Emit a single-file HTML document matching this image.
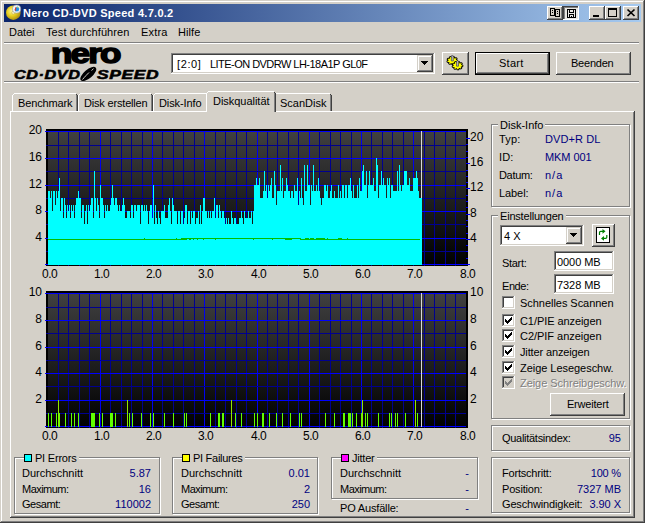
<!DOCTYPE html>
<html lang="de"><head><meta charset="utf-8"><title>Nero CD-DVD Speed 4.7.0.2</title><style>
html,body{margin:0;padding:0}
body{width:645px;height:523px;overflow:hidden;background:#d4d0c8;position:relative;font-family:"Liberation Sans",sans-serif}
body>div,body>svg,body>span{position:absolute;box-sizing:content-box}
.t{white-space:pre;font-size:11px;line-height:13px;color:#000}
.ctr{letter-spacing:-0.5px}
.logo1{font-weight:bold;font-size:30px;line-height:30px;letter-spacing:-1.6px;-webkit-text-stroke:1.6px #000;transform-origin:0 0;transform:scale(1.17,0.9)}
.logo2{font-weight:bold;font-style:italic;font-size:11px;line-height:12px;letter-spacing:0.4px;transform-origin:0 0;transform:scale(1.42,1);-webkit-text-stroke:0.5px #000}
</style></head><body>
<div style="left:0px;top:0px;width:645px;height:1px;background:#d4d0c8;"></div>
<div style="left:0px;top:0px;width:1px;height:523px;background:#d4d0c8;"></div>
<div style="left:1px;top:1px;width:643px;height:1px;background:#ffffff;"></div>
<div style="left:1px;top:1px;width:1px;height:521px;background:#ffffff;"></div>
<div style="left:644px;top:0px;width:1px;height:523px;background:#404040;"></div>
<div style="left:0px;top:522px;width:645px;height:1px;background:#404040;"></div>
<div style="left:643px;top:1px;width:1px;height:521px;background:#808080;"></div>
<div style="left:1px;top:521px;width:643px;height:1px;background:#808080;"></div>
<div style="left:4px;top:4px;width:637px;height:18px;background:linear-gradient(to right,#0a246a,#a6caf0)"></div>
<svg style="left:5px;top:4px" width="17" height="17" viewBox="5 4 17 17">
<defs><radialGradient id="cdg" cx="0.4" cy="0.4" r="0.7"><stop offset="0" stop-color="#fff8a0"/><stop offset="0.45" stop-color="#e8d020"/><stop offset="1" stop-color="#a08010"/></radialGradient></defs>
<circle cx="13.300" cy="12.700" r="7.300" fill="url(#cdg)"/>
<circle cx="13.300" cy="12.700" r="1.600" fill="#f8f0b0" stroke="#c0a830" stroke-width=".5"/>
<circle cx="16.600" cy="9" r="4.100" fill="#f4f4f4" stroke="#9098b0" stroke-width=".6"/>
<path d="M14.500 9.500 L16.500 7 L19.300 8.500 L18.500 11.300 L15.500 11.500z" fill="#2090e8"/>
<path d="M15.300 7.200 L16.400 7.600 L15.600 11 L14.800 10.500z" fill="#e03020"/>
<path d="M16.500 6.200 L18.800 7.200 L18 8z" fill="#40b040"/>
</svg>
<div style="left:547px;top:6px;width:16px;height:14px;background:#d4d0c8;"></div>
<div style="left:547px;top:6px;width:15px;height:1px;background:#ffffff;"></div>
<div style="left:547px;top:6px;width:1px;height:13px;background:#ffffff;"></div>
<div style="left:547px;top:19px;width:16px;height:1px;background:#404040;"></div>
<div style="left:562px;top:6px;width:1px;height:14px;background:#404040;"></div>
<div style="left:548px;top:18px;width:14px;height:1px;background:#808080;"></div>
<div style="left:561px;top:7px;width:1px;height:12px;background:#808080;"></div>
<div style="left:563px;top:6px;width:16px;height:14px;background:#e9e7e3;"></div>
<div style="left:563px;top:6px;width:16px;height:1px;background:#404040;"></div>
<div style="left:563px;top:6px;width:1px;height:14px;background:#404040;"></div>
<div style="left:564px;top:7px;width:14px;height:1px;background:#808080;"></div>
<div style="left:564px;top:7px;width:1px;height:12px;background:#808080;"></div>
<div style="left:563px;top:19px;width:16px;height:1px;background:#ffffff;"></div>
<div style="left:578px;top:6px;width:1px;height:14px;background:#ffffff;"></div>
<div style="left:589px;top:6px;width:16px;height:14px;background:#d4d0c8;"></div>
<div style="left:589px;top:6px;width:15px;height:1px;background:#ffffff;"></div>
<div style="left:589px;top:6px;width:1px;height:13px;background:#ffffff;"></div>
<div style="left:589px;top:19px;width:16px;height:1px;background:#404040;"></div>
<div style="left:604px;top:6px;width:1px;height:14px;background:#404040;"></div>
<div style="left:590px;top:18px;width:14px;height:1px;background:#808080;"></div>
<div style="left:603px;top:7px;width:1px;height:12px;background:#808080;"></div>
<div style="left:605px;top:6px;width:16px;height:14px;background:#d4d0c8;"></div>
<div style="left:605px;top:6px;width:15px;height:1px;background:#ffffff;"></div>
<div style="left:605px;top:6px;width:1px;height:13px;background:#ffffff;"></div>
<div style="left:605px;top:19px;width:16px;height:1px;background:#404040;"></div>
<div style="left:620px;top:6px;width:1px;height:14px;background:#404040;"></div>
<div style="left:606px;top:18px;width:14px;height:1px;background:#808080;"></div>
<div style="left:619px;top:7px;width:1px;height:12px;background:#808080;"></div>
<div style="left:623px;top:6px;width:16px;height:14px;background:#d4d0c8;"></div>
<div style="left:623px;top:6px;width:15px;height:1px;background:#ffffff;"></div>
<div style="left:623px;top:6px;width:1px;height:13px;background:#ffffff;"></div>
<div style="left:623px;top:19px;width:16px;height:1px;background:#404040;"></div>
<div style="left:638px;top:6px;width:1px;height:14px;background:#404040;"></div>
<div style="left:624px;top:18px;width:14px;height:1px;background:#808080;"></div>
<div style="left:637px;top:7px;width:1px;height:12px;background:#808080;"></div>
<svg style="left:547px;top:6px" width="92" height="14" viewBox="0 0 92 14" shape-rendering="crispEdges">
<g fill="none" stroke="#000" stroke-width="1">
<path d="M3.5 2.5h4v7h-4z M8.5 3.5h4v7h-4z"/>
<path d="M5 4.5h1 M5 6.5h1 M10 5.5h1 M10 7.5h1"/>
<path d="M20.500 3.500h8v8h-8z M22.5 3.500v3h4v-3 M22.5 11.5v-3h4v3 M24.5 9.5v1"/>
</g>
<rect x="46" y="9" width="6" height="2" fill="#000"/>
<path d="M61.500 2.500h8v8h-8z M61.500 3.500h8" fill="none" stroke="#000"/>
</svg>
<svg style="left:623px;top:6px" width="16" height="14" viewBox="0 0 16 14">
<path d="M4.500 3.500l7 6.500 M11.500 3.500l-7 6.500" stroke="#000" stroke-width="1.700" fill="none"/>
</svg>
<div style="left:4px;top:42px;width:635px;height:1px;background:#808080;"></div>
<div style="left:4px;top:43px;width:635px;height:1px;background:#ffffff;"></div>
<span class="t logo1" style="left:51px;top:40px">nero</span>
<span class="t logo2" style="left:14px;top:68px;transform:scale(1.47,1.08)">CD·DVD</span>
<span class="t logo2" style="left:97px;top:68px;transform:scale(1.58,1.08)">SPEED</span>
<svg style="left:78px;top:65px" width="21" height="17" viewBox="78 65 21 17">
<ellipse cx="88.300" cy="74" rx="9.800" ry="4.300" transform="rotate(-40 88.300 74)" fill="#000"/>
<path d="M82.500 79.500 C85 76.500 87 74.500 89 72.500 M91.500 70.500 L93.500 68.700" stroke="#d4d0c8" stroke-width="1" fill="none"/>
</svg>
<div style="left:171px;top:53px;width:264px;height:21px;background:#fff;"></div>
<div style="left:171px;top:53px;width:263px;height:1px;background:#808080;"></div>
<div style="left:171px;top:53px;width:1px;height:20px;background:#808080;"></div>
<div style="left:172px;top:54px;width:261px;height:1px;background:#404040;"></div>
<div style="left:172px;top:54px;width:1px;height:18px;background:#404040;"></div>
<div style="left:171px;top:73px;width:264px;height:1px;background:#ffffff;"></div>
<div style="left:434px;top:53px;width:1px;height:21px;background:#ffffff;"></div>
<div style="left:172px;top:72px;width:262px;height:1px;background:#d4d0c8;"></div>
<div style="left:433px;top:54px;width:1px;height:19px;background:#d4d0c8;"></div>
<div style="left:417px;top:55px;width:16px;height:17px;background:#d4d0c8;"></div>
<div style="left:417px;top:55px;width:15px;height:1px;background:#d4d0c8;"></div>
<div style="left:417px;top:55px;width:1px;height:16px;background:#d4d0c8;"></div>
<div style="left:418px;top:56px;width:13px;height:1px;background:#ffffff;"></div>
<div style="left:418px;top:56px;width:1px;height:14px;background:#ffffff;"></div>
<div style="left:417px;top:71px;width:16px;height:1px;background:#404040;"></div>
<div style="left:432px;top:55px;width:1px;height:17px;background:#404040;"></div>
<div style="left:418px;top:70px;width:14px;height:1px;background:#808080;"></div>
<div style="left:431px;top:56px;width:1px;height:15px;background:#808080;"></div>
<svg style="left:421px;top:61px" width="7" height="4" shape-rendering="crispEdges"><path d="M0 0h7l-3.500 4z" fill="#000"/></svg>
<div style="left:442px;top:52px;width:27px;height:23px;background:#d4d0c8;"></div>
<div style="left:442px;top:52px;width:26px;height:1px;background:#ffffff;"></div>
<div style="left:442px;top:52px;width:1px;height:22px;background:#ffffff;"></div>
<div style="left:442px;top:74px;width:27px;height:1px;background:#404040;"></div>
<div style="left:468px;top:52px;width:1px;height:23px;background:#404040;"></div>
<div style="left:443px;top:73px;width:25px;height:1px;background:#808080;"></div>
<div style="left:467px;top:53px;width:1px;height:21px;background:#808080;"></div>
<svg style="left:444px;top:53px" width="22" height="20" viewBox="444 53 22 20">
<path d="M457.30 60.60 L457.22 61.26 L455.78 61.56 L455.50 62.01 L456.13 63.04 L455.51 63.51 L454.15 63.04 L453.57 63.24 L453.17 64.34 L452.30 64.40 L451.66 63.37 L451.03 63.24 L449.80 63.89 L449.09 63.51 L449.47 62.41 L449.10 62.01 L447.60 61.90 L447.38 61.26 L448.60 60.60 L448.66 60.11 L447.60 59.30 L447.97 58.70 L449.47 58.79 L449.92 58.45 L449.80 57.31 L450.59 57.03 L451.66 57.83 L452.30 57.79 L453.17 56.86 L454.01 57.03 L454.15 58.16 L454.68 58.45 L456.13 58.16 L456.63 58.70 L455.78 59.64 L455.94 60.11z" fill="#ffff00" stroke="#000" stroke-width="1.800" stroke-linejoin="round"/>
<path d="M457.30 60.60 L457.22 61.26 L455.78 61.56 L455.50 62.01 L456.13 63.04 L455.51 63.51 L454.15 63.04 L453.57 63.24 L453.17 64.34 L452.30 64.40 L451.66 63.37 L451.03 63.24 L449.80 63.89 L449.09 63.51 L449.47 62.41 L449.10 62.01 L447.60 61.90 L447.38 61.26 L448.60 60.60 L448.66 60.11 L447.60 59.30 L447.97 58.70 L449.47 58.79 L449.92 58.45 L449.80 57.31 L450.59 57.03 L451.66 57.83 L452.30 57.79 L453.17 56.86 L454.01 57.03 L454.15 58.16 L454.68 58.45 L456.13 58.16 L456.63 58.70 L455.78 59.64 L455.94 60.11z" fill="#ffff00"/>
<path d="M462.50 65.60 L462.42 66.26 L460.98 66.56 L460.70 67.01 L461.33 68.04 L460.71 68.51 L459.35 68.04 L458.77 68.24 L458.37 69.34 L457.50 69.40 L456.86 68.37 L456.23 68.24 L455.00 68.89 L454.29 68.51 L454.67 67.41 L454.30 67.01 L452.80 66.90 L452.58 66.26 L453.80 65.60 L453.86 65.11 L452.80 64.30 L453.17 63.70 L454.67 63.79 L455.12 63.45 L455.00 62.31 L455.79 62.03 L456.86 62.83 L457.50 62.79 L458.37 61.86 L459.21 62.03 L459.35 63.16 L459.88 63.45 L461.33 63.16 L461.83 63.70 L460.98 64.64 L461.14 65.11z" fill="#ffff00" stroke="#000" stroke-width="1.800" stroke-linejoin="round"/>
<path d="M462.50 65.60 L462.42 66.26 L460.98 66.56 L460.70 67.01 L461.33 68.04 L460.71 68.51 L459.35 68.04 L458.77 68.24 L458.37 69.34 L457.50 69.40 L456.86 68.37 L456.23 68.24 L455.00 68.89 L454.29 68.51 L454.67 67.41 L454.30 67.01 L452.80 66.90 L452.58 66.26 L453.80 65.60 L453.86 65.11 L452.80 64.30 L453.17 63.70 L454.67 63.79 L455.12 63.45 L455.00 62.31 L455.79 62.03 L456.86 62.83 L457.50 62.79 L458.37 61.86 L459.21 62.03 L459.35 63.16 L459.88 63.45 L461.33 63.16 L461.83 63.70 L460.98 64.64 L461.14 65.11z" fill="#ffff00"/>
<path d="M451.300 56 L452.300 55 L453.300 56 V61 H451.300z" fill="#b0b0c0" stroke="#303030" stroke-width=".6"/>
<path d="M456.500 61.500 L457.500 60.500 L458.500 61.500 V66.200 H456.500z" fill="#b0b0c0" stroke="#303030" stroke-width=".6"/>
</svg>
<div style="left:475px;top:52px;width:75px;height:23px;background:#000;"></div>
<div style="left:476px;top:53px;width:73px;height:21px;background:#d4d0c8;"></div>
<div style="left:476px;top:53px;width:72px;height:1px;background:#ffffff;"></div>
<div style="left:476px;top:53px;width:1px;height:20px;background:#ffffff;"></div>
<div style="left:476px;top:73px;width:73px;height:1px;background:#404040;"></div>
<div style="left:548px;top:53px;width:1px;height:21px;background:#404040;"></div>
<div style="left:477px;top:72px;width:71px;height:1px;background:#808080;"></div>
<div style="left:547px;top:54px;width:1px;height:19px;background:#808080;"></div>
<div style="left:556px;top:52px;width:75px;height:23px;background:#d4d0c8;"></div>
<div style="left:556px;top:52px;width:74px;height:1px;background:#ffffff;"></div>
<div style="left:556px;top:52px;width:1px;height:22px;background:#ffffff;"></div>
<div style="left:556px;top:74px;width:75px;height:1px;background:#404040;"></div>
<div style="left:630px;top:52px;width:1px;height:23px;background:#404040;"></div>
<div style="left:557px;top:73px;width:73px;height:1px;background:#808080;"></div>
<div style="left:629px;top:53px;width:1px;height:21px;background:#808080;"></div>
<div style="left:4px;top:81px;width:635px;height:1px;background:#808080;"></div>
<div style="left:4px;top:82px;width:635px;height:1px;background:#ffffff;"></div>
<div style="left:10px;top:111px;width:624px;height:1px;background:#ffffff;"></div>
<div style="left:10px;top:111px;width:1px;height:406px;background:#ffffff;"></div>
<div style="left:634px;top:111px;width:1px;height:407px;background:#404040;"></div>
<div style="left:10px;top:517px;width:625px;height:1px;background:#404040;"></div>
<div style="left:633px;top:112px;width:1px;height:405px;background:#808080;"></div>
<div style="left:11px;top:516px;width:623px;height:1px;background:#808080;"></div>
<div style="left:12px;top:93px;width:66px;height:18px;background:#d4d0c8;"></div>
<div style="left:12px;top:95px;width:1px;height:16px;background:#ffffff;"></div>
<div style="left:14px;top:93px;width:62px;height:1px;background:#ffffff;"></div>
<div style="left:13px;top:94px;width:1px;height:1px;background:#ffffff;"></div>
<div style="left:77px;top:95px;width:1px;height:16px;background:#404040;"></div>
<div style="left:76px;top:94px;width:1px;height:17px;background:#808080;"></div>
<div style="left:76px;top:94px;width:1px;height:1px;background:#404040;"></div>
<div style="left:78px;top:93px;width:75px;height:18px;background:#d4d0c8;"></div>
<div style="left:78px;top:95px;width:1px;height:16px;background:#ffffff;"></div>
<div style="left:80px;top:93px;width:71px;height:1px;background:#ffffff;"></div>
<div style="left:79px;top:94px;width:1px;height:1px;background:#ffffff;"></div>
<div style="left:152px;top:95px;width:1px;height:16px;background:#404040;"></div>
<div style="left:151px;top:94px;width:1px;height:17px;background:#808080;"></div>
<div style="left:151px;top:94px;width:1px;height:1px;background:#404040;"></div>
<div style="left:153px;top:93px;width:56px;height:18px;background:#d4d0c8;"></div>
<div style="left:153px;top:95px;width:1px;height:16px;background:#ffffff;"></div>
<div style="left:155px;top:93px;width:52px;height:1px;background:#ffffff;"></div>
<div style="left:154px;top:94px;width:1px;height:1px;background:#ffffff;"></div>
<div style="left:208px;top:95px;width:1px;height:16px;background:#404040;"></div>
<div style="left:207px;top:94px;width:1px;height:17px;background:#808080;"></div>
<div style="left:207px;top:94px;width:1px;height:1px;background:#404040;"></div>
<div style="left:273px;top:93px;width:59px;height:18px;background:#d4d0c8;"></div>
<div style="left:273px;top:95px;width:1px;height:16px;background:#ffffff;"></div>
<div style="left:275px;top:93px;width:55px;height:1px;background:#ffffff;"></div>
<div style="left:274px;top:94px;width:1px;height:1px;background:#ffffff;"></div>
<div style="left:331px;top:95px;width:1px;height:16px;background:#404040;"></div>
<div style="left:330px;top:94px;width:1px;height:17px;background:#808080;"></div>
<div style="left:330px;top:94px;width:1px;height:1px;background:#404040;"></div>
<div style="left:206px;top:91px;width:70px;height:21px;background:#d4d0c8;"></div>
<div style="left:206px;top:93px;width:1px;height:19px;background:#ffffff;"></div>
<div style="left:208px;top:91px;width:66px;height:1px;background:#ffffff;"></div>
<div style="left:207px;top:92px;width:1px;height:1px;background:#ffffff;"></div>
<div style="left:275px;top:93px;width:1px;height:19px;background:#404040;"></div>
<div style="left:274px;top:92px;width:1px;height:20px;background:#808080;"></div>
<div style="left:274px;top:92px;width:1px;height:1px;background:#404040;"></div>
<div style="left:492px;top:125px;width:137px;height:81px;border:1px solid #ffffff"></div>
<div style="left:491px;top:124px;width:137px;height:81px;border:1px solid #808080"></div>
<div style="left:498px;top:118px;width:47px;height:13px;background:#d4d0c8;"></div>
<div style="left:492px;top:216px;width:137px;height:202px;border:1px solid #ffffff"></div>
<div style="left:491px;top:215px;width:137px;height:202px;border:1px solid #808080"></div>
<div style="left:498px;top:209px;width:68px;height:13px;background:#d4d0c8;"></div>
<div style="left:500px;top:225px;width:84px;height:21px;background:#fff;"></div>
<div style="left:500px;top:225px;width:83px;height:1px;background:#808080;"></div>
<div style="left:500px;top:225px;width:1px;height:20px;background:#808080;"></div>
<div style="left:501px;top:226px;width:81px;height:1px;background:#404040;"></div>
<div style="left:501px;top:226px;width:1px;height:18px;background:#404040;"></div>
<div style="left:500px;top:245px;width:84px;height:1px;background:#ffffff;"></div>
<div style="left:583px;top:225px;width:1px;height:21px;background:#ffffff;"></div>
<div style="left:501px;top:244px;width:82px;height:1px;background:#d4d0c8;"></div>
<div style="left:582px;top:226px;width:1px;height:19px;background:#d4d0c8;"></div>
<div style="left:566px;top:227px;width:16px;height:17px;background:#d4d0c8;"></div>
<div style="left:566px;top:227px;width:15px;height:1px;background:#d4d0c8;"></div>
<div style="left:566px;top:227px;width:1px;height:16px;background:#d4d0c8;"></div>
<div style="left:567px;top:228px;width:13px;height:1px;background:#ffffff;"></div>
<div style="left:567px;top:228px;width:1px;height:14px;background:#ffffff;"></div>
<div style="left:566px;top:243px;width:16px;height:1px;background:#404040;"></div>
<div style="left:581px;top:227px;width:1px;height:17px;background:#404040;"></div>
<div style="left:567px;top:242px;width:14px;height:1px;background:#808080;"></div>
<div style="left:580px;top:228px;width:1px;height:15px;background:#808080;"></div>
<svg style="left:570px;top:233px" width="7" height="4" shape-rendering="crispEdges"><path d="M0 0h7l-3.500 4z" fill="#000"/></svg>
<div style="left:592px;top:224px;width:23px;height:23px;background:#d4d0c8;"></div>
<div style="left:592px;top:224px;width:22px;height:1px;background:#ffffff;"></div>
<div style="left:592px;top:224px;width:1px;height:22px;background:#ffffff;"></div>
<div style="left:592px;top:246px;width:23px;height:1px;background:#404040;"></div>
<div style="left:614px;top:224px;width:1px;height:23px;background:#404040;"></div>
<div style="left:593px;top:245px;width:21px;height:1px;background:#808080;"></div>
<div style="left:613px;top:225px;width:1px;height:21px;background:#808080;"></div>
<svg style="left:596px;top:227px" width="14" height="16" viewBox="596 227 14 16">
<rect x="596.500" y="227.500" width="13" height="15" fill="#fff" stroke="#000"/>
<g fill="none" stroke="#008000" stroke-width="1.200"><path d="M599.500 235v-2.500q0-1.200 1.200-1.200h3"/><path d="M606.800 235v2.200q0 1.200-1.200 1.200h-3"/></g>
<path d="M602.500 229l3 2.300-3 2.400z M604 236l-3 2.400 3 2.400z" fill="#008000"/>
</svg>
<div style="left:554px;top:251px;width:60px;height:20px;background:#fff;"></div>
<div style="left:554px;top:251px;width:59px;height:1px;background:#808080;"></div>
<div style="left:554px;top:251px;width:1px;height:19px;background:#808080;"></div>
<div style="left:555px;top:252px;width:57px;height:1px;background:#404040;"></div>
<div style="left:555px;top:252px;width:1px;height:17px;background:#404040;"></div>
<div style="left:554px;top:270px;width:60px;height:1px;background:#ffffff;"></div>
<div style="left:613px;top:251px;width:1px;height:20px;background:#ffffff;"></div>
<div style="left:555px;top:269px;width:58px;height:1px;background:#d4d0c8;"></div>
<div style="left:612px;top:252px;width:1px;height:18px;background:#d4d0c8;"></div>
<div style="left:554px;top:274px;width:60px;height:20px;background:#fff;"></div>
<div style="left:554px;top:274px;width:59px;height:1px;background:#808080;"></div>
<div style="left:554px;top:274px;width:1px;height:19px;background:#808080;"></div>
<div style="left:555px;top:275px;width:57px;height:1px;background:#404040;"></div>
<div style="left:555px;top:275px;width:1px;height:17px;background:#404040;"></div>
<div style="left:554px;top:293px;width:60px;height:1px;background:#ffffff;"></div>
<div style="left:613px;top:274px;width:1px;height:20px;background:#ffffff;"></div>
<div style="left:555px;top:292px;width:58px;height:1px;background:#d4d0c8;"></div>
<div style="left:612px;top:275px;width:1px;height:18px;background:#d4d0c8;"></div>
<div style="left:502px;top:296px;width:13px;height:13px;background:#fff;"></div>
<div style="left:502px;top:296px;width:12px;height:1px;background:#808080;"></div>
<div style="left:502px;top:296px;width:1px;height:12px;background:#808080;"></div>
<div style="left:503px;top:297px;width:10px;height:1px;background:#404040;"></div>
<div style="left:503px;top:297px;width:1px;height:10px;background:#404040;"></div>
<div style="left:502px;top:308px;width:13px;height:1px;background:#ffffff;"></div>
<div style="left:514px;top:296px;width:1px;height:13px;background:#ffffff;"></div>
<div style="left:503px;top:307px;width:11px;height:1px;background:#d4d0c8;"></div>
<div style="left:513px;top:297px;width:1px;height:11px;background:#d4d0c8;"></div>
<div style="left:502px;top:314px;width:13px;height:13px;background:#fff;"></div>
<div style="left:502px;top:314px;width:12px;height:1px;background:#808080;"></div>
<div style="left:502px;top:314px;width:1px;height:12px;background:#808080;"></div>
<div style="left:503px;top:315px;width:10px;height:1px;background:#404040;"></div>
<div style="left:503px;top:315px;width:1px;height:10px;background:#404040;"></div>
<div style="left:502px;top:326px;width:13px;height:1px;background:#ffffff;"></div>
<div style="left:514px;top:314px;width:1px;height:13px;background:#ffffff;"></div>
<div style="left:503px;top:325px;width:11px;height:1px;background:#d4d0c8;"></div>
<div style="left:513px;top:315px;width:1px;height:11px;background:#d4d0c8;"></div>
<svg style="left:505px;top:317px" width="7" height="7" shape-rendering="crispEdges"><path d="M0 2v3l2 2 5-5V-1L2 4z" fill="#000"/></svg>
<div style="left:502px;top:329px;width:13px;height:13px;background:#fff;"></div>
<div style="left:502px;top:329px;width:12px;height:1px;background:#808080;"></div>
<div style="left:502px;top:329px;width:1px;height:12px;background:#808080;"></div>
<div style="left:503px;top:330px;width:10px;height:1px;background:#404040;"></div>
<div style="left:503px;top:330px;width:1px;height:10px;background:#404040;"></div>
<div style="left:502px;top:341px;width:13px;height:1px;background:#ffffff;"></div>
<div style="left:514px;top:329px;width:1px;height:13px;background:#ffffff;"></div>
<div style="left:503px;top:340px;width:11px;height:1px;background:#d4d0c8;"></div>
<div style="left:513px;top:330px;width:1px;height:11px;background:#d4d0c8;"></div>
<svg style="left:505px;top:332px" width="7" height="7" shape-rendering="crispEdges"><path d="M0 2v3l2 2 5-5V-1L2 4z" fill="#000"/></svg>
<div style="left:502px;top:345px;width:13px;height:13px;background:#fff;"></div>
<div style="left:502px;top:345px;width:12px;height:1px;background:#808080;"></div>
<div style="left:502px;top:345px;width:1px;height:12px;background:#808080;"></div>
<div style="left:503px;top:346px;width:10px;height:1px;background:#404040;"></div>
<div style="left:503px;top:346px;width:1px;height:10px;background:#404040;"></div>
<div style="left:502px;top:357px;width:13px;height:1px;background:#ffffff;"></div>
<div style="left:514px;top:345px;width:1px;height:13px;background:#ffffff;"></div>
<div style="left:503px;top:356px;width:11px;height:1px;background:#d4d0c8;"></div>
<div style="left:513px;top:346px;width:1px;height:11px;background:#d4d0c8;"></div>
<svg style="left:505px;top:348px" width="7" height="7" shape-rendering="crispEdges"><path d="M0 2v3l2 2 5-5V-1L2 4z" fill="#000"/></svg>
<div style="left:502px;top:361px;width:13px;height:13px;background:#fff;"></div>
<div style="left:502px;top:361px;width:12px;height:1px;background:#808080;"></div>
<div style="left:502px;top:361px;width:1px;height:12px;background:#808080;"></div>
<div style="left:503px;top:362px;width:10px;height:1px;background:#404040;"></div>
<div style="left:503px;top:362px;width:1px;height:10px;background:#404040;"></div>
<div style="left:502px;top:373px;width:13px;height:1px;background:#ffffff;"></div>
<div style="left:514px;top:361px;width:1px;height:13px;background:#ffffff;"></div>
<div style="left:503px;top:372px;width:11px;height:1px;background:#d4d0c8;"></div>
<div style="left:513px;top:362px;width:1px;height:11px;background:#d4d0c8;"></div>
<svg style="left:505px;top:364px" width="7" height="7" shape-rendering="crispEdges"><path d="M0 2v3l2 2 5-5V-1L2 4z" fill="#000"/></svg>
<div style="left:502px;top:376px;width:13px;height:13px;background:#d4d0c8;"></div>
<div style="left:502px;top:376px;width:12px;height:1px;background:#808080;"></div>
<div style="left:502px;top:376px;width:1px;height:12px;background:#808080;"></div>
<div style="left:503px;top:377px;width:10px;height:1px;background:#404040;"></div>
<div style="left:503px;top:377px;width:1px;height:10px;background:#404040;"></div>
<div style="left:502px;top:388px;width:13px;height:1px;background:#ffffff;"></div>
<div style="left:514px;top:376px;width:1px;height:13px;background:#ffffff;"></div>
<div style="left:503px;top:387px;width:11px;height:1px;background:#d4d0c8;"></div>
<div style="left:513px;top:377px;width:1px;height:11px;background:#d4d0c8;"></div>
<svg style="left:505px;top:379px" width="7" height="7" shape-rendering="crispEdges"><path d="M0 2v3l2 2 5-5V-1L2 4z" fill="#808080"/></svg>
<div style="left:550px;top:393px;width:75px;height:23px;background:#d4d0c8;"></div>
<div style="left:550px;top:393px;width:74px;height:1px;background:#ffffff;"></div>
<div style="left:550px;top:393px;width:1px;height:22px;background:#ffffff;"></div>
<div style="left:550px;top:415px;width:75px;height:1px;background:#404040;"></div>
<div style="left:624px;top:393px;width:1px;height:23px;background:#404040;"></div>
<div style="left:551px;top:414px;width:73px;height:1px;background:#808080;"></div>
<div style="left:623px;top:394px;width:1px;height:21px;background:#808080;"></div>
<div style="left:492px;top:426px;width:137px;height:24px;border:1px solid #ffffff"></div>
<div style="left:491px;top:425px;width:137px;height:24px;border:1px solid #808080"></div>
<div style="left:492px;top:458px;width:137px;height:54px;border:1px solid #ffffff"></div>
<div style="left:491px;top:457px;width:137px;height:54px;border:1px solid #808080"></div>
<div style="left:15px;top:458px;width:144px;height:55px;border:1px solid #ffffff"></div>
<div style="left:14px;top:457px;width:144px;height:55px;border:1px solid #808080"></div>
<div style="left:24px;top:451px;width:55px;height:13px;background:#d4d0c8;"></div>
<div style="left:24px;top:454px;width:8px;height:8px;background:#000;"></div>
<div style="left:25px;top:455px;width:6px;height:6px;background:#00ffff;"></div>
<div style="left:173px;top:458px;width:144px;height:55px;border:1px solid #ffffff"></div>
<div style="left:172px;top:457px;width:144px;height:55px;border:1px solid #808080"></div>
<div style="left:182px;top:451px;width:63px;height:13px;background:#d4d0c8;"></div>
<div style="left:182px;top:454px;width:8px;height:8px;background:#000;"></div>
<div style="left:183px;top:455px;width:6px;height:6px;background:#ffff00;"></div>
<div style="left:332px;top:458px;width:145px;height:40px;border:1px solid #ffffff"></div>
<div style="left:331px;top:457px;width:145px;height:40px;border:1px solid #808080"></div>
<div style="left:341px;top:451px;width:36px;height:13px;background:#d4d0c8;"></div>
<div style="left:341px;top:454px;width:8px;height:8px;background:#000;"></div>
<div style="left:342px;top:455px;width:6px;height:6px;background:#ff00ff;"></div>
<svg style="left:0;top:0" width="645" height="523" viewBox="0 0 645 523" shape-rendering="crispEdges"><defs><linearGradient id="bg" x1="0" y1="0" x2="0" y2="1"><stop offset="0" stop-color="#404040"/><stop offset="1" stop-color="#000"/></linearGradient></defs><rect x="46" y="129" width="422" height="137" fill="#000"/><rect x="48" y="131" width="418" height="134" fill="url(#bg)"/><rect x="58" y="131" width="1" height="134" fill="#000090"/><rect x="68" y="131" width="1" height="134" fill="#000090"/><rect x="79" y="131" width="1" height="134" fill="#000090"/><rect x="89" y="131" width="1" height="134" fill="#000090"/><rect x="100" y="131" width="1" height="134" fill="#0000f0"/><rect x="110" y="131" width="1" height="134" fill="#000090"/><rect x="121" y="131" width="1" height="134" fill="#000090"/><rect x="131" y="131" width="1" height="134" fill="#000090"/><rect x="142" y="131" width="1" height="134" fill="#000090"/><rect x="152" y="131" width="1" height="134" fill="#0000f0"/><rect x="162" y="131" width="1" height="134" fill="#000090"/><rect x="173" y="131" width="1" height="134" fill="#000090"/><rect x="183" y="131" width="1" height="134" fill="#000090"/><rect x="194" y="131" width="1" height="134" fill="#000090"/><rect x="204" y="131" width="1" height="134" fill="#0000f0"/><rect x="215" y="131" width="1" height="134" fill="#000090"/><rect x="225" y="131" width="1" height="134" fill="#000090"/><rect x="236" y="131" width="1" height="134" fill="#000090"/><rect x="246" y="131" width="1" height="134" fill="#000090"/><rect x="257" y="131" width="1" height="134" fill="#0000f0"/><rect x="267" y="131" width="1" height="134" fill="#000090"/><rect x="277" y="131" width="1" height="134" fill="#000090"/><rect x="288" y="131" width="1" height="134" fill="#000090"/><rect x="298" y="131" width="1" height="134" fill="#000090"/><rect x="309" y="131" width="1" height="134" fill="#0000f0"/><rect x="319" y="131" width="1" height="134" fill="#000090"/><rect x="330" y="131" width="1" height="134" fill="#000090"/><rect x="340" y="131" width="1" height="134" fill="#000090"/><rect x="351" y="131" width="1" height="134" fill="#000090"/><rect x="361" y="131" width="1" height="134" fill="#0000f0"/><rect x="371" y="131" width="1" height="134" fill="#000090"/><rect x="382" y="131" width="1" height="134" fill="#000090"/><rect x="392" y="131" width="1" height="134" fill="#000090"/><rect x="403" y="131" width="1" height="134" fill="#000090"/><rect x="413" y="131" width="1" height="134" fill="#0000f0"/><rect x="424" y="131" width="1" height="134" fill="#000090"/><rect x="434" y="131" width="1" height="134" fill="#000090"/><rect x="445" y="131" width="1" height="134" fill="#000090"/><rect x="455" y="131" width="1" height="134" fill="#000090"/><rect x="45" y="131" width="421" height="1" fill="#0000ff"/><rect x="46" y="145" width="420" height="1" fill="#000090"/><rect x="45" y="158" width="421" height="1" fill="#0000ff"/><rect x="46" y="171" width="420" height="1" fill="#000090"/><rect x="45" y="185" width="421" height="1" fill="#0000ff"/><rect x="46" y="198" width="420" height="1" fill="#000090"/><rect x="45" y="211" width="421" height="1" fill="#0000ff"/><rect x="46" y="224" width="420" height="1" fill="#000090"/><rect x="45" y="238" width="421" height="1" fill="#0000ff"/><rect x="46" y="251" width="420" height="1" fill="#000090"/><rect x="45" y="264" width="421" height="1" fill="#0000ff"/><rect x="421" y="131" width="1" height="134" fill="#d8d8d8"/><rect x="48" y="191" width="1" height="74" fill="#00ffff"/><rect x="49" y="191" width="1" height="74" fill="#00ffff"/><rect x="50" y="198" width="1" height="67" fill="#00ffff"/><rect x="51" y="191" width="1" height="74" fill="#00ffff"/><rect x="52" y="211" width="1" height="54" fill="#00ffff"/><rect x="53" y="191" width="1" height="74" fill="#00ffff"/><rect x="54" y="191" width="1" height="74" fill="#00ffff"/><rect x="55" y="205" width="1" height="60" fill="#00ffff"/><rect x="56" y="191" width="1" height="74" fill="#00ffff"/><rect x="57" y="198" width="1" height="67" fill="#00ffff"/><rect x="58" y="191" width="1" height="74" fill="#00ffff"/><rect x="59" y="178" width="1" height="87" fill="#00ffff"/><rect x="60" y="211" width="1" height="54" fill="#00ffff"/><rect x="61" y="198" width="1" height="67" fill="#00ffff"/><rect x="62" y="198" width="1" height="67" fill="#00ffff"/><rect x="63" y="218" width="1" height="47" fill="#00ffff"/><rect x="64" y="198" width="1" height="67" fill="#00ffff"/><rect x="65" y="205" width="1" height="60" fill="#00ffff"/><rect x="66" y="218" width="1" height="47" fill="#00ffff"/><rect x="67" y="205" width="1" height="60" fill="#00ffff"/><rect x="68" y="211" width="1" height="54" fill="#00ffff"/><rect x="69" y="205" width="1" height="60" fill="#00ffff"/><rect x="70" y="218" width="1" height="47" fill="#00ffff"/><rect x="71" y="205" width="1" height="60" fill="#00ffff"/><rect x="72" y="211" width="1" height="54" fill="#00ffff"/><rect x="73" y="205" width="1" height="60" fill="#00ffff"/><rect x="74" y="218" width="1" height="47" fill="#00ffff"/><rect x="75" y="205" width="1" height="60" fill="#00ffff"/><rect x="76" y="198" width="1" height="67" fill="#00ffff"/><rect x="77" y="198" width="1" height="67" fill="#00ffff"/><rect x="78" y="191" width="1" height="74" fill="#00ffff"/><rect x="79" y="198" width="1" height="67" fill="#00ffff"/><rect x="80" y="198" width="1" height="67" fill="#00ffff"/><rect x="81" y="218" width="1" height="47" fill="#00ffff"/><rect x="82" y="205" width="1" height="60" fill="#00ffff"/><rect x="83" y="205" width="1" height="60" fill="#00ffff"/><rect x="84" y="224" width="1" height="41" fill="#00ffff"/><rect x="85" y="211" width="1" height="54" fill="#00ffff"/><rect x="86" y="205" width="1" height="60" fill="#00ffff"/><rect x="87" y="224" width="1" height="41" fill="#00ffff"/><rect x="88" y="205" width="1" height="60" fill="#00ffff"/><rect x="89" y="211" width="1" height="54" fill="#00ffff"/><rect x="90" y="205" width="1" height="60" fill="#00ffff"/><rect x="91" y="198" width="1" height="67" fill="#00ffff"/><rect x="92" y="198" width="1" height="67" fill="#00ffff"/><rect x="93" y="218" width="1" height="47" fill="#00ffff"/><rect x="94" y="171" width="1" height="94" fill="#00ffff"/><rect x="95" y="198" width="1" height="67" fill="#00ffff"/><rect x="96" y="211" width="1" height="54" fill="#00ffff"/><rect x="97" y="198" width="1" height="67" fill="#00ffff"/><rect x="98" y="205" width="1" height="60" fill="#00ffff"/><rect x="99" y="218" width="1" height="47" fill="#00ffff"/><rect x="100" y="185" width="1" height="80" fill="#00ffff"/><rect x="101" y="198" width="1" height="67" fill="#00ffff"/><rect x="102" y="198" width="1" height="67" fill="#00ffff"/><rect x="103" y="205" width="1" height="60" fill="#00ffff"/><rect x="104" y="218" width="1" height="47" fill="#00ffff"/><rect x="105" y="205" width="1" height="60" fill="#00ffff"/><rect x="106" y="211" width="1" height="54" fill="#00ffff"/><rect x="107" y="205" width="1" height="60" fill="#00ffff"/><rect x="108" y="211" width="1" height="54" fill="#00ffff"/><rect x="109" y="211" width="1" height="54" fill="#00ffff"/><rect x="110" y="205" width="1" height="60" fill="#00ffff"/><rect x="111" y="198" width="1" height="67" fill="#00ffff"/><rect x="112" y="185" width="1" height="80" fill="#00ffff"/><rect x="113" y="198" width="1" height="67" fill="#00ffff"/><rect x="114" y="205" width="1" height="60" fill="#00ffff"/><rect x="115" y="198" width="1" height="67" fill="#00ffff"/><rect x="116" y="198" width="1" height="67" fill="#00ffff"/><rect x="117" y="205" width="1" height="60" fill="#00ffff"/><rect x="118" y="211" width="1" height="54" fill="#00ffff"/><rect x="119" y="205" width="1" height="60" fill="#00ffff"/><rect x="120" y="211" width="1" height="54" fill="#00ffff"/><rect x="121" y="211" width="1" height="54" fill="#00ffff"/><rect x="122" y="205" width="1" height="60" fill="#00ffff"/><rect x="123" y="198" width="1" height="67" fill="#00ffff"/><rect x="124" y="205" width="1" height="60" fill="#00ffff"/><rect x="125" y="218" width="1" height="47" fill="#00ffff"/><rect x="126" y="218" width="1" height="47" fill="#00ffff"/><rect x="127" y="211" width="1" height="54" fill="#00ffff"/><rect x="128" y="211" width="1" height="54" fill="#00ffff"/><rect x="129" y="211" width="1" height="54" fill="#00ffff"/><rect x="130" y="218" width="1" height="47" fill="#00ffff"/><rect x="131" y="205" width="1" height="60" fill="#00ffff"/><rect x="132" y="205" width="1" height="60" fill="#00ffff"/><rect x="133" y="218" width="1" height="47" fill="#00ffff"/><rect x="134" y="205" width="1" height="60" fill="#00ffff"/><rect x="135" y="205" width="1" height="60" fill="#00ffff"/><rect x="136" y="211" width="1" height="54" fill="#00ffff"/><rect x="137" y="205" width="1" height="60" fill="#00ffff"/><rect x="138" y="205" width="1" height="60" fill="#00ffff"/><rect x="139" y="205" width="1" height="60" fill="#00ffff"/><rect x="140" y="224" width="1" height="41" fill="#00ffff"/><rect x="141" y="205" width="1" height="60" fill="#00ffff"/><rect x="142" y="205" width="1" height="60" fill="#00ffff"/><rect x="143" y="211" width="1" height="54" fill="#00ffff"/><rect x="144" y="205" width="1" height="60" fill="#00ffff"/><rect x="145" y="211" width="1" height="54" fill="#00ffff"/><rect x="146" y="205" width="1" height="60" fill="#00ffff"/><rect x="147" y="211" width="1" height="54" fill="#00ffff"/><rect x="148" y="224" width="1" height="41" fill="#00ffff"/><rect x="149" y="211" width="1" height="54" fill="#00ffff"/><rect x="150" y="205" width="1" height="60" fill="#00ffff"/><rect x="151" y="205" width="1" height="60" fill="#00ffff"/><rect x="152" y="218" width="1" height="47" fill="#00ffff"/><rect x="153" y="185" width="1" height="80" fill="#00ffff"/><rect x="154" y="224" width="1" height="41" fill="#00ffff"/><rect x="155" y="205" width="1" height="60" fill="#00ffff"/><rect x="156" y="218" width="1" height="47" fill="#00ffff"/><rect x="157" y="224" width="1" height="41" fill="#00ffff"/><rect x="158" y="211" width="1" height="54" fill="#00ffff"/><rect x="159" y="218" width="1" height="47" fill="#00ffff"/><rect x="160" y="224" width="1" height="41" fill="#00ffff"/><rect x="161" y="211" width="1" height="54" fill="#00ffff"/><rect x="162" y="211" width="1" height="54" fill="#00ffff"/><rect x="163" y="211" width="1" height="54" fill="#00ffff"/><rect x="164" y="205" width="1" height="60" fill="#00ffff"/><rect x="165" y="218" width="1" height="47" fill="#00ffff"/><rect x="166" y="218" width="1" height="47" fill="#00ffff"/><rect x="167" y="218" width="1" height="47" fill="#00ffff"/><rect x="168" y="205" width="1" height="60" fill="#00ffff"/><rect x="169" y="198" width="1" height="67" fill="#00ffff"/><rect x="170" y="211" width="1" height="54" fill="#00ffff"/><rect x="171" y="224" width="1" height="41" fill="#00ffff"/><rect x="172" y="198" width="1" height="67" fill="#00ffff"/><rect x="173" y="205" width="1" height="60" fill="#00ffff"/><rect x="174" y="211" width="1" height="54" fill="#00ffff"/><rect x="175" y="211" width="1" height="54" fill="#00ffff"/><rect x="176" y="211" width="1" height="54" fill="#00ffff"/><rect x="177" y="224" width="1" height="41" fill="#00ffff"/><rect x="178" y="211" width="1" height="54" fill="#00ffff"/><rect x="179" y="211" width="1" height="54" fill="#00ffff"/><rect x="180" y="224" width="1" height="41" fill="#00ffff"/><rect x="181" y="211" width="1" height="54" fill="#00ffff"/><rect x="182" y="211" width="1" height="54" fill="#00ffff"/><rect x="183" y="224" width="1" height="41" fill="#00ffff"/><rect x="184" y="218" width="1" height="47" fill="#00ffff"/><rect x="185" y="205" width="1" height="60" fill="#00ffff"/><rect x="186" y="205" width="1" height="60" fill="#00ffff"/><rect x="187" y="224" width="1" height="41" fill="#00ffff"/><rect x="188" y="211" width="1" height="54" fill="#00ffff"/><rect x="189" y="211" width="1" height="54" fill="#00ffff"/><rect x="190" y="224" width="1" height="41" fill="#00ffff"/><rect x="191" y="211" width="1" height="54" fill="#00ffff"/><rect x="192" y="218" width="1" height="47" fill="#00ffff"/><rect x="193" y="211" width="1" height="54" fill="#00ffff"/><rect x="194" y="211" width="1" height="54" fill="#00ffff"/><rect x="195" y="224" width="1" height="41" fill="#00ffff"/><rect x="196" y="218" width="1" height="47" fill="#00ffff"/><rect x="197" y="218" width="1" height="47" fill="#00ffff"/><rect x="198" y="211" width="1" height="54" fill="#00ffff"/><rect x="199" y="224" width="1" height="41" fill="#00ffff"/><rect x="200" y="205" width="1" height="60" fill="#00ffff"/><rect x="201" y="224" width="1" height="41" fill="#00ffff"/><rect x="202" y="211" width="1" height="54" fill="#00ffff"/><rect x="203" y="198" width="1" height="67" fill="#00ffff"/><rect x="204" y="198" width="1" height="67" fill="#00ffff"/><rect x="205" y="211" width="1" height="54" fill="#00ffff"/><rect x="206" y="211" width="1" height="54" fill="#00ffff"/><rect x="207" y="218" width="1" height="47" fill="#00ffff"/><rect x="208" y="211" width="1" height="54" fill="#00ffff"/><rect x="209" y="218" width="1" height="47" fill="#00ffff"/><rect x="210" y="211" width="1" height="54" fill="#00ffff"/><rect x="211" y="218" width="1" height="47" fill="#00ffff"/><rect x="212" y="211" width="1" height="54" fill="#00ffff"/><rect x="213" y="211" width="1" height="54" fill="#00ffff"/><rect x="214" y="198" width="1" height="67" fill="#00ffff"/><rect x="215" y="218" width="1" height="47" fill="#00ffff"/><rect x="216" y="205" width="1" height="60" fill="#00ffff"/><rect x="217" y="205" width="1" height="60" fill="#00ffff"/><rect x="218" y="218" width="1" height="47" fill="#00ffff"/><rect x="219" y="205" width="1" height="60" fill="#00ffff"/><rect x="220" y="211" width="1" height="54" fill="#00ffff"/><rect x="221" y="218" width="1" height="47" fill="#00ffff"/><rect x="222" y="211" width="1" height="54" fill="#00ffff"/><rect x="223" y="211" width="1" height="54" fill="#00ffff"/><rect x="224" y="218" width="1" height="47" fill="#00ffff"/><rect x="225" y="224" width="1" height="41" fill="#00ffff"/><rect x="226" y="218" width="1" height="47" fill="#00ffff"/><rect x="227" y="224" width="1" height="41" fill="#00ffff"/><rect x="228" y="218" width="1" height="47" fill="#00ffff"/><rect x="229" y="224" width="1" height="41" fill="#00ffff"/><rect x="230" y="224" width="1" height="41" fill="#00ffff"/><rect x="231" y="211" width="1" height="54" fill="#00ffff"/><rect x="232" y="218" width="1" height="47" fill="#00ffff"/><rect x="233" y="224" width="1" height="41" fill="#00ffff"/><rect x="234" y="218" width="1" height="47" fill="#00ffff"/><rect x="235" y="218" width="1" height="47" fill="#00ffff"/><rect x="236" y="224" width="1" height="41" fill="#00ffff"/><rect x="237" y="224" width="1" height="41" fill="#00ffff"/><rect x="238" y="224" width="1" height="41" fill="#00ffff"/><rect x="239" y="218" width="1" height="47" fill="#00ffff"/><rect x="240" y="218" width="1" height="47" fill="#00ffff"/><rect x="241" y="211" width="1" height="54" fill="#00ffff"/><rect x="242" y="218" width="1" height="47" fill="#00ffff"/><rect x="243" y="224" width="1" height="41" fill="#00ffff"/><rect x="244" y="211" width="1" height="54" fill="#00ffff"/><rect x="245" y="218" width="1" height="47" fill="#00ffff"/><rect x="246" y="218" width="1" height="47" fill="#00ffff"/><rect x="247" y="218" width="1" height="47" fill="#00ffff"/><rect x="248" y="211" width="1" height="54" fill="#00ffff"/><rect x="249" y="218" width="1" height="47" fill="#00ffff"/><rect x="250" y="218" width="1" height="47" fill="#00ffff"/><rect x="251" y="211" width="1" height="54" fill="#00ffff"/><rect x="252" y="224" width="1" height="41" fill="#00ffff"/><rect x="253" y="211" width="1" height="54" fill="#00ffff"/><rect x="254" y="185" width="1" height="80" fill="#00ffff"/><rect x="255" y="185" width="1" height="80" fill="#00ffff"/><rect x="256" y="178" width="1" height="87" fill="#00ffff"/><rect x="257" y="185" width="1" height="80" fill="#00ffff"/><rect x="258" y="185" width="1" height="80" fill="#00ffff"/><rect x="259" y="178" width="1" height="87" fill="#00ffff"/><rect x="260" y="198" width="1" height="67" fill="#00ffff"/><rect x="261" y="198" width="1" height="67" fill="#00ffff"/><rect x="262" y="198" width="1" height="67" fill="#00ffff"/><rect x="263" y="191" width="1" height="74" fill="#00ffff"/><rect x="264" y="171" width="1" height="94" fill="#00ffff"/><rect x="265" y="191" width="1" height="74" fill="#00ffff"/><rect x="266" y="185" width="1" height="80" fill="#00ffff"/><rect x="267" y="198" width="1" height="67" fill="#00ffff"/><rect x="268" y="185" width="1" height="80" fill="#00ffff"/><rect x="269" y="191" width="1" height="74" fill="#00ffff"/><rect x="270" y="185" width="1" height="80" fill="#00ffff"/><rect x="271" y="178" width="1" height="87" fill="#00ffff"/><rect x="272" y="198" width="1" height="67" fill="#00ffff"/><rect x="273" y="198" width="1" height="67" fill="#00ffff"/><rect x="274" y="171" width="1" height="94" fill="#00ffff"/><rect x="275" y="185" width="1" height="80" fill="#00ffff"/><rect x="276" y="205" width="1" height="60" fill="#00ffff"/><rect x="277" y="191" width="1" height="74" fill="#00ffff"/><rect x="278" y="191" width="1" height="74" fill="#00ffff"/><rect x="279" y="191" width="1" height="74" fill="#00ffff"/><rect x="280" y="165" width="1" height="100" fill="#00ffff"/><rect x="281" y="191" width="1" height="74" fill="#00ffff"/><rect x="282" y="178" width="1" height="87" fill="#00ffff"/><rect x="283" y="198" width="1" height="67" fill="#00ffff"/><rect x="284" y="191" width="1" height="74" fill="#00ffff"/><rect x="285" y="191" width="1" height="74" fill="#00ffff"/><rect x="286" y="178" width="1" height="87" fill="#00ffff"/><rect x="287" y="185" width="1" height="80" fill="#00ffff"/><rect x="288" y="191" width="1" height="74" fill="#00ffff"/><rect x="289" y="191" width="1" height="74" fill="#00ffff"/><rect x="290" y="198" width="1" height="67" fill="#00ffff"/><rect x="291" y="191" width="1" height="74" fill="#00ffff"/><rect x="292" y="191" width="1" height="74" fill="#00ffff"/><rect x="293" y="198" width="1" height="67" fill="#00ffff"/><rect x="294" y="185" width="1" height="80" fill="#00ffff"/><rect x="295" y="191" width="1" height="74" fill="#00ffff"/><rect x="296" y="191" width="1" height="74" fill="#00ffff"/><rect x="297" y="178" width="1" height="87" fill="#00ffff"/><rect x="298" y="205" width="1" height="60" fill="#00ffff"/><rect x="299" y="191" width="1" height="74" fill="#00ffff"/><rect x="300" y="198" width="1" height="67" fill="#00ffff"/><rect x="301" y="178" width="1" height="87" fill="#00ffff"/><rect x="302" y="198" width="1" height="67" fill="#00ffff"/><rect x="303" y="205" width="1" height="60" fill="#00ffff"/><rect x="304" y="165" width="1" height="100" fill="#00ffff"/><rect x="305" y="191" width="1" height="74" fill="#00ffff"/><rect x="306" y="191" width="1" height="74" fill="#00ffff"/><rect x="307" y="165" width="1" height="100" fill="#00ffff"/><rect x="308" y="185" width="1" height="80" fill="#00ffff"/><rect x="309" y="185" width="1" height="80" fill="#00ffff"/><rect x="310" y="205" width="1" height="60" fill="#00ffff"/><rect x="311" y="185" width="1" height="80" fill="#00ffff"/><rect x="312" y="191" width="1" height="74" fill="#00ffff"/><rect x="313" y="165" width="1" height="100" fill="#00ffff"/><rect x="314" y="191" width="1" height="74" fill="#00ffff"/><rect x="315" y="191" width="1" height="74" fill="#00ffff"/><rect x="316" y="185" width="1" height="80" fill="#00ffff"/><rect x="317" y="191" width="1" height="74" fill="#00ffff"/><rect x="318" y="178" width="1" height="87" fill="#00ffff"/><rect x="319" y="191" width="1" height="74" fill="#00ffff"/><rect x="320" y="198" width="1" height="67" fill="#00ffff"/><rect x="321" y="205" width="1" height="60" fill="#00ffff"/><rect x="322" y="198" width="1" height="67" fill="#00ffff"/><rect x="323" y="198" width="1" height="67" fill="#00ffff"/><rect x="324" y="185" width="1" height="80" fill="#00ffff"/><rect x="325" y="185" width="1" height="80" fill="#00ffff"/><rect x="326" y="191" width="1" height="74" fill="#00ffff"/><rect x="327" y="185" width="1" height="80" fill="#00ffff"/><rect x="328" y="198" width="1" height="67" fill="#00ffff"/><rect x="329" y="198" width="1" height="67" fill="#00ffff"/><rect x="330" y="191" width="1" height="74" fill="#00ffff"/><rect x="331" y="185" width="1" height="80" fill="#00ffff"/><rect x="332" y="198" width="1" height="67" fill="#00ffff"/><rect x="333" y="198" width="1" height="67" fill="#00ffff"/><rect x="334" y="191" width="1" height="74" fill="#00ffff"/><rect x="335" y="198" width="1" height="67" fill="#00ffff"/><rect x="336" y="198" width="1" height="67" fill="#00ffff"/><rect x="337" y="198" width="1" height="67" fill="#00ffff"/><rect x="338" y="185" width="1" height="80" fill="#00ffff"/><rect x="339" y="198" width="1" height="67" fill="#00ffff"/><rect x="340" y="191" width="1" height="74" fill="#00ffff"/><rect x="341" y="198" width="1" height="67" fill="#00ffff"/><rect x="342" y="185" width="1" height="80" fill="#00ffff"/><rect x="343" y="185" width="1" height="80" fill="#00ffff"/><rect x="344" y="198" width="1" height="67" fill="#00ffff"/><rect x="345" y="185" width="1" height="80" fill="#00ffff"/><rect x="346" y="185" width="1" height="80" fill="#00ffff"/><rect x="347" y="198" width="1" height="67" fill="#00ffff"/><rect x="348" y="185" width="1" height="80" fill="#00ffff"/><rect x="349" y="185" width="1" height="80" fill="#00ffff"/><rect x="350" y="178" width="1" height="87" fill="#00ffff"/><rect x="351" y="191" width="1" height="74" fill="#00ffff"/><rect x="352" y="198" width="1" height="67" fill="#00ffff"/><rect x="353" y="185" width="1" height="80" fill="#00ffff"/><rect x="354" y="198" width="1" height="67" fill="#00ffff"/><rect x="355" y="198" width="1" height="67" fill="#00ffff"/><rect x="356" y="198" width="1" height="67" fill="#00ffff"/><rect x="357" y="185" width="1" height="80" fill="#00ffff"/><rect x="358" y="198" width="1" height="67" fill="#00ffff"/><rect x="359" y="178" width="1" height="87" fill="#00ffff"/><rect x="360" y="191" width="1" height="74" fill="#00ffff"/><rect x="361" y="191" width="1" height="74" fill="#00ffff"/><rect x="362" y="171" width="1" height="94" fill="#00ffff"/><rect x="363" y="165" width="1" height="100" fill="#00ffff"/><rect x="364" y="185" width="1" height="80" fill="#00ffff"/><rect x="365" y="185" width="1" height="80" fill="#00ffff"/><rect x="366" y="171" width="1" height="94" fill="#00ffff"/><rect x="367" y="198" width="1" height="67" fill="#00ffff"/><rect x="368" y="185" width="1" height="80" fill="#00ffff"/><rect x="369" y="171" width="1" height="94" fill="#00ffff"/><rect x="370" y="185" width="1" height="80" fill="#00ffff"/><rect x="371" y="185" width="1" height="80" fill="#00ffff"/><rect x="372" y="185" width="1" height="80" fill="#00ffff"/><rect x="373" y="178" width="1" height="87" fill="#00ffff"/><rect x="374" y="191" width="1" height="74" fill="#00ffff"/><rect x="375" y="191" width="1" height="74" fill="#00ffff"/><rect x="376" y="158" width="1" height="107" fill="#00ffff"/><rect x="377" y="165" width="1" height="100" fill="#00ffff"/><rect x="378" y="198" width="1" height="67" fill="#00ffff"/><rect x="379" y="185" width="1" height="80" fill="#00ffff"/><rect x="380" y="185" width="1" height="80" fill="#00ffff"/><rect x="381" y="171" width="1" height="94" fill="#00ffff"/><rect x="382" y="185" width="1" height="80" fill="#00ffff"/><rect x="383" y="178" width="1" height="87" fill="#00ffff"/><rect x="384" y="185" width="1" height="80" fill="#00ffff"/><rect x="385" y="185" width="1" height="80" fill="#00ffff"/><rect x="386" y="198" width="1" height="67" fill="#00ffff"/><rect x="387" y="178" width="1" height="87" fill="#00ffff"/><rect x="388" y="185" width="1" height="80" fill="#00ffff"/><rect x="389" y="178" width="1" height="87" fill="#00ffff"/><rect x="390" y="198" width="1" height="67" fill="#00ffff"/><rect x="391" y="185" width="1" height="80" fill="#00ffff"/><rect x="392" y="185" width="1" height="80" fill="#00ffff"/><rect x="393" y="191" width="1" height="74" fill="#00ffff"/><rect x="394" y="191" width="1" height="74" fill="#00ffff"/><rect x="395" y="191" width="1" height="74" fill="#00ffff"/><rect x="396" y="191" width="1" height="74" fill="#00ffff"/><rect x="397" y="171" width="1" height="94" fill="#00ffff"/><rect x="398" y="191" width="1" height="74" fill="#00ffff"/><rect x="399" y="165" width="1" height="100" fill="#00ffff"/><rect x="400" y="185" width="1" height="80" fill="#00ffff"/><rect x="401" y="191" width="1" height="74" fill="#00ffff"/><rect x="402" y="185" width="1" height="80" fill="#00ffff"/><rect x="403" y="185" width="1" height="80" fill="#00ffff"/><rect x="404" y="171" width="1" height="94" fill="#00ffff"/><rect x="405" y="171" width="1" height="94" fill="#00ffff"/><rect x="406" y="171" width="1" height="94" fill="#00ffff"/><rect x="407" y="185" width="1" height="80" fill="#00ffff"/><rect x="408" y="185" width="1" height="80" fill="#00ffff"/><rect x="409" y="178" width="1" height="87" fill="#00ffff"/><rect x="410" y="191" width="1" height="74" fill="#00ffff"/><rect x="411" y="191" width="1" height="74" fill="#00ffff"/><rect x="412" y="191" width="1" height="74" fill="#00ffff"/><rect x="413" y="178" width="1" height="87" fill="#00ffff"/><rect x="414" y="178" width="1" height="87" fill="#00ffff"/><rect x="415" y="178" width="1" height="87" fill="#00ffff"/><rect x="416" y="171" width="1" height="94" fill="#00ffff"/><rect x="417" y="178" width="1" height="87" fill="#00ffff"/><rect x="418" y="191" width="1" height="74" fill="#00ffff"/><rect x="419" y="198" width="1" height="67" fill="#00ffff"/><rect x="420" y="198" width="1" height="67" fill="#00ffff"/><rect x="421" y="198" width="1" height="67" fill="#00ffff"/><rect x="48" y="239" width="139" height="1" fill="#00c000"/><rect x="181" y="238" width="120" height="1" fill="#00c000"/><rect x="300" y="239" width="120" height="1" fill="#00c000"/><rect x="144" y="238" width="1" height="1" fill="#00c000"/><rect x="176" y="238" width="1" height="1" fill="#00c000"/><rect x="189" y="239" width="2" height="1" fill="#00c000"/><rect x="193" y="239" width="1" height="1" fill="#00c000"/><rect x="197" y="239" width="1" height="1" fill="#00c000"/><rect x="203" y="239" width="1" height="1" fill="#00c000"/><rect x="215" y="239" width="1" height="1" fill="#00c000"/><rect x="253" y="239" width="1" height="1" fill="#00c000"/><rect x="272" y="239" width="1" height="1" fill="#00c000"/><rect x="285" y="239" width="7" height="1" fill="#00c000"/><rect x="305" y="238" width="4" height="1" fill="#00c000"/><rect x="310" y="238" width="4" height="1" fill="#00c000"/><rect x="316" y="238" width="9" height="1" fill="#00c000"/><rect x="327" y="238" width="1" height="1" fill="#00c000"/><rect x="338" y="238" width="4" height="1" fill="#00c000"/><rect x="347" y="238" width="1" height="1" fill="#00c000"/><rect x="58" y="265" width="1" height="1" fill="#000090"/><rect x="68" y="265" width="1" height="1" fill="#000090"/><rect x="79" y="265" width="1" height="1" fill="#000090"/><rect x="89" y="265" width="1" height="1" fill="#000090"/><rect x="100" y="265" width="1" height="1" fill="#000090"/><rect x="110" y="265" width="1" height="1" fill="#000090"/><rect x="121" y="265" width="1" height="1" fill="#000090"/><rect x="131" y="265" width="1" height="1" fill="#000090"/><rect x="142" y="265" width="1" height="1" fill="#000090"/><rect x="152" y="265" width="1" height="1" fill="#000090"/><rect x="162" y="265" width="1" height="1" fill="#000090"/><rect x="173" y="265" width="1" height="1" fill="#000090"/><rect x="183" y="265" width="1" height="1" fill="#000090"/><rect x="194" y="265" width="1" height="1" fill="#000090"/><rect x="204" y="265" width="1" height="1" fill="#000090"/><rect x="215" y="265" width="1" height="1" fill="#000090"/><rect x="225" y="265" width="1" height="1" fill="#000090"/><rect x="236" y="265" width="1" height="1" fill="#000090"/><rect x="246" y="265" width="1" height="1" fill="#000090"/><rect x="257" y="265" width="1" height="1" fill="#000090"/><rect x="267" y="265" width="1" height="1" fill="#000090"/><rect x="277" y="265" width="1" height="1" fill="#000090"/><rect x="288" y="265" width="1" height="1" fill="#000090"/><rect x="298" y="265" width="1" height="1" fill="#000090"/><rect x="309" y="265" width="1" height="1" fill="#000090"/><rect x="319" y="265" width="1" height="1" fill="#000090"/><rect x="330" y="265" width="1" height="1" fill="#000090"/><rect x="340" y="265" width="1" height="1" fill="#000090"/><rect x="351" y="265" width="1" height="1" fill="#000090"/><rect x="361" y="265" width="1" height="1" fill="#000090"/><rect x="371" y="265" width="1" height="1" fill="#000090"/><rect x="382" y="265" width="1" height="1" fill="#000090"/><rect x="392" y="265" width="1" height="1" fill="#000090"/><rect x="403" y="265" width="1" height="1" fill="#000090"/><rect x="413" y="265" width="1" height="1" fill="#000090"/><rect x="424" y="265" width="1" height="1" fill="#000090"/><rect x="434" y="265" width="1" height="1" fill="#000090"/><rect x="445" y="265" width="1" height="1" fill="#000090"/><rect x="455" y="265" width="1" height="1" fill="#000090"/><rect x="46" y="291" width="422" height="137" fill="#000"/><rect x="48" y="293" width="418" height="134" fill="url(#bg)"/><rect x="58" y="293" width="1" height="134" fill="#000090"/><rect x="68" y="293" width="1" height="134" fill="#000090"/><rect x="79" y="293" width="1" height="134" fill="#000090"/><rect x="89" y="293" width="1" height="134" fill="#000090"/><rect x="100" y="293" width="1" height="134" fill="#0000f0"/><rect x="110" y="293" width="1" height="134" fill="#000090"/><rect x="121" y="293" width="1" height="134" fill="#000090"/><rect x="131" y="293" width="1" height="134" fill="#000090"/><rect x="142" y="293" width="1" height="134" fill="#000090"/><rect x="152" y="293" width="1" height="134" fill="#0000f0"/><rect x="162" y="293" width="1" height="134" fill="#000090"/><rect x="173" y="293" width="1" height="134" fill="#000090"/><rect x="183" y="293" width="1" height="134" fill="#000090"/><rect x="194" y="293" width="1" height="134" fill="#000090"/><rect x="204" y="293" width="1" height="134" fill="#0000f0"/><rect x="215" y="293" width="1" height="134" fill="#000090"/><rect x="225" y="293" width="1" height="134" fill="#000090"/><rect x="236" y="293" width="1" height="134" fill="#000090"/><rect x="246" y="293" width="1" height="134" fill="#000090"/><rect x="257" y="293" width="1" height="134" fill="#0000f0"/><rect x="267" y="293" width="1" height="134" fill="#000090"/><rect x="277" y="293" width="1" height="134" fill="#000090"/><rect x="288" y="293" width="1" height="134" fill="#000090"/><rect x="298" y="293" width="1" height="134" fill="#000090"/><rect x="309" y="293" width="1" height="134" fill="#0000f0"/><rect x="319" y="293" width="1" height="134" fill="#000090"/><rect x="330" y="293" width="1" height="134" fill="#000090"/><rect x="340" y="293" width="1" height="134" fill="#000090"/><rect x="351" y="293" width="1" height="134" fill="#000090"/><rect x="361" y="293" width="1" height="134" fill="#0000f0"/><rect x="371" y="293" width="1" height="134" fill="#000090"/><rect x="382" y="293" width="1" height="134" fill="#000090"/><rect x="392" y="293" width="1" height="134" fill="#000090"/><rect x="403" y="293" width="1" height="134" fill="#000090"/><rect x="413" y="293" width="1" height="134" fill="#0000f0"/><rect x="424" y="293" width="1" height="134" fill="#000090"/><rect x="434" y="293" width="1" height="134" fill="#000090"/><rect x="445" y="293" width="1" height="134" fill="#000090"/><rect x="455" y="293" width="1" height="134" fill="#000090"/><rect x="45" y="293" width="421" height="1" fill="#0000ff"/><rect x="46" y="307" width="420" height="1" fill="#000090"/><rect x="45" y="320" width="421" height="1" fill="#0000ff"/><rect x="46" y="333" width="420" height="1" fill="#000090"/><rect x="45" y="347" width="421" height="1" fill="#0000ff"/><rect x="46" y="360" width="420" height="1" fill="#000090"/><rect x="45" y="373" width="421" height="1" fill="#0000ff"/><rect x="46" y="386" width="420" height="1" fill="#000090"/><rect x="45" y="400" width="421" height="1" fill="#0000ff"/><rect x="46" y="413" width="420" height="1" fill="#000090"/><rect x="45" y="426" width="421" height="1" fill="#0000ff"/><rect x="421" y="293" width="1" height="134" fill="#d8d8d8"/><rect x="48" y="413" width="1" height="14" fill="#60ff00"/><rect x="51" y="413" width="1" height="14" fill="#60ff00"/><rect x="56" y="413" width="1" height="14" fill="#60ff00"/><rect x="58" y="413" width="1" height="14" fill="#60ff00"/><rect x="59" y="413" width="1" height="14" fill="#60ff00"/><rect x="65" y="413" width="1" height="14" fill="#60ff00"/><rect x="71" y="413" width="1" height="14" fill="#60ff00"/><rect x="74" y="413" width="1" height="14" fill="#60ff00"/><rect x="78" y="413" width="1" height="14" fill="#60ff00"/><rect x="91" y="413" width="1" height="14" fill="#60ff00"/><rect x="92" y="413" width="1" height="14" fill="#60ff00"/><rect x="93" y="413" width="1" height="14" fill="#60ff00"/><rect x="94" y="413" width="1" height="14" fill="#60ff00"/><rect x="99" y="413" width="1" height="14" fill="#60ff00"/><rect x="102" y="413" width="1" height="14" fill="#60ff00"/><rect x="110" y="413" width="1" height="14" fill="#60ff00"/><rect x="111" y="413" width="1" height="14" fill="#60ff00"/><rect x="112" y="413" width="1" height="14" fill="#60ff00"/><rect x="115" y="413" width="1" height="14" fill="#60ff00"/><rect x="129" y="413" width="1" height="14" fill="#60ff00"/><rect x="132" y="413" width="1" height="14" fill="#60ff00"/><rect x="141" y="413" width="1" height="14" fill="#60ff00"/><rect x="150" y="413" width="1" height="14" fill="#60ff00"/><rect x="153" y="413" width="1" height="14" fill="#60ff00"/><rect x="164" y="413" width="1" height="14" fill="#60ff00"/><rect x="173" y="413" width="1" height="14" fill="#60ff00"/><rect x="184" y="413" width="1" height="14" fill="#60ff00"/><rect x="186" y="413" width="1" height="14" fill="#60ff00"/><rect x="210" y="413" width="1" height="14" fill="#60ff00"/><rect x="218" y="413" width="1" height="14" fill="#60ff00"/><rect x="219" y="413" width="1" height="14" fill="#60ff00"/><rect x="222" y="413" width="1" height="14" fill="#60ff00"/><rect x="223" y="413" width="1" height="14" fill="#60ff00"/><rect x="235" y="413" width="1" height="14" fill="#60ff00"/><rect x="241" y="413" width="1" height="14" fill="#60ff00"/><rect x="254" y="413" width="1" height="14" fill="#60ff00"/><rect x="257" y="413" width="1" height="14" fill="#60ff00"/><rect x="262" y="413" width="1" height="14" fill="#60ff00"/><rect x="263" y="413" width="1" height="14" fill="#60ff00"/><rect x="269" y="413" width="1" height="14" fill="#60ff00"/><rect x="276" y="413" width="1" height="14" fill="#60ff00"/><rect x="282" y="413" width="1" height="14" fill="#60ff00"/><rect x="290" y="413" width="1" height="14" fill="#60ff00"/><rect x="299" y="413" width="1" height="14" fill="#60ff00"/><rect x="301" y="413" width="1" height="14" fill="#60ff00"/><rect x="325" y="413" width="1" height="14" fill="#60ff00"/><rect x="334" y="413" width="1" height="14" fill="#60ff00"/><rect x="343" y="413" width="1" height="14" fill="#60ff00"/><rect x="344" y="413" width="1" height="14" fill="#60ff00"/><rect x="348" y="413" width="1" height="14" fill="#60ff00"/><rect x="349" y="413" width="1" height="14" fill="#60ff00"/><rect x="350" y="413" width="1" height="14" fill="#60ff00"/><rect x="352" y="413" width="1" height="14" fill="#60ff00"/><rect x="356" y="413" width="1" height="14" fill="#60ff00"/><rect x="361" y="413" width="1" height="14" fill="#60ff00"/><rect x="362" y="413" width="1" height="14" fill="#60ff00"/><rect x="365" y="413" width="1" height="14" fill="#60ff00"/><rect x="367" y="413" width="1" height="14" fill="#60ff00"/><rect x="378" y="413" width="1" height="14" fill="#60ff00"/><rect x="389" y="413" width="1" height="14" fill="#60ff00"/><rect x="391" y="413" width="1" height="14" fill="#60ff00"/><rect x="395" y="413" width="1" height="14" fill="#60ff00"/><rect x="397" y="413" width="1" height="14" fill="#60ff00"/><rect x="405" y="413" width="1" height="14" fill="#60ff00"/><rect x="417" y="413" width="1" height="14" fill="#60ff00"/><rect x="58" y="400" width="1" height="27" fill="#90e800"/><rect x="127" y="400" width="1" height="27" fill="#90e800"/><rect x="231" y="400" width="1" height="27" fill="#90e800"/><rect x="362" y="400" width="1" height="27" fill="#90e800"/><rect x="415" y="400" width="1" height="27" fill="#90e800"/><rect x="58" y="427" width="1" height="1" fill="#000090"/><rect x="68" y="427" width="1" height="1" fill="#000090"/><rect x="79" y="427" width="1" height="1" fill="#000090"/><rect x="89" y="427" width="1" height="1" fill="#000090"/><rect x="100" y="427" width="1" height="1" fill="#000090"/><rect x="110" y="427" width="1" height="1" fill="#000090"/><rect x="121" y="427" width="1" height="1" fill="#000090"/><rect x="131" y="427" width="1" height="1" fill="#000090"/><rect x="142" y="427" width="1" height="1" fill="#000090"/><rect x="152" y="427" width="1" height="1" fill="#000090"/><rect x="162" y="427" width="1" height="1" fill="#000090"/><rect x="173" y="427" width="1" height="1" fill="#000090"/><rect x="183" y="427" width="1" height="1" fill="#000090"/><rect x="194" y="427" width="1" height="1" fill="#000090"/><rect x="204" y="427" width="1" height="1" fill="#000090"/><rect x="215" y="427" width="1" height="1" fill="#000090"/><rect x="225" y="427" width="1" height="1" fill="#000090"/><rect x="236" y="427" width="1" height="1" fill="#000090"/><rect x="246" y="427" width="1" height="1" fill="#000090"/><rect x="257" y="427" width="1" height="1" fill="#000090"/><rect x="267" y="427" width="1" height="1" fill="#000090"/><rect x="277" y="427" width="1" height="1" fill="#000090"/><rect x="288" y="427" width="1" height="1" fill="#000090"/><rect x="298" y="427" width="1" height="1" fill="#000090"/><rect x="309" y="427" width="1" height="1" fill="#000090"/><rect x="319" y="427" width="1" height="1" fill="#000090"/><rect x="330" y="427" width="1" height="1" fill="#000090"/><rect x="340" y="427" width="1" height="1" fill="#000090"/><rect x="351" y="427" width="1" height="1" fill="#000090"/><rect x="361" y="427" width="1" height="1" fill="#000090"/><rect x="371" y="427" width="1" height="1" fill="#000090"/><rect x="382" y="427" width="1" height="1" fill="#000090"/><rect x="392" y="427" width="1" height="1" fill="#000090"/><rect x="403" y="427" width="1" height="1" fill="#000090"/><rect x="413" y="427" width="1" height="1" fill="#000090"/><rect x="424" y="427" width="1" height="1" fill="#000090"/><rect x="434" y="427" width="1" height="1" fill="#000090"/><rect x="445" y="427" width="1" height="1" fill="#000090"/><rect x="455" y="427" width="1" height="1" fill="#000090"/><rect x="466" y="264" width="4" height="1" fill="#0000ff"/><rect x="466" y="258" width="2" height="1" fill="#0000ff"/><rect x="466" y="251" width="2" height="1" fill="#0000ff"/><rect x="466" y="245" width="2" height="1" fill="#0000ff"/><rect x="466" y="239" width="4" height="1" fill="#0000ff"/><rect x="466" y="233" width="2" height="1" fill="#0000ff"/><rect x="466" y="226" width="2" height="1" fill="#0000ff"/><rect x="466" y="220" width="2" height="1" fill="#0000ff"/><rect x="466" y="214" width="4" height="1" fill="#0000ff"/><rect x="466" y="207" width="2" height="1" fill="#0000ff"/><rect x="466" y="201" width="2" height="1" fill="#0000ff"/><rect x="466" y="195" width="2" height="1" fill="#0000ff"/><rect x="466" y="188" width="4" height="1" fill="#0000ff"/><rect x="466" y="182" width="2" height="1" fill="#0000ff"/><rect x="466" y="176" width="2" height="1" fill="#0000ff"/><rect x="466" y="170" width="2" height="1" fill="#0000ff"/><rect x="466" y="163" width="4" height="1" fill="#0000ff"/><rect x="466" y="157" width="2" height="1" fill="#0000ff"/><rect x="466" y="151" width="2" height="1" fill="#0000ff"/><rect x="466" y="144" width="2" height="1" fill="#0000ff"/><rect x="466" y="138" width="4" height="1" fill="#0000ff"/></svg>
<span class="t " id="t0" style="top:7px;font-size:11px;line-height:13px;color:#fff;font-weight:bold;letter-spacing:0.274px;left:23px;">Nero CD-DVD Speed 4.7.0.2</span>
<span class="t " id="t1" style="top:26px;font-size:11px;line-height:13px;color:#000;letter-spacing:-0.037px;left:9px;">Datei</span>
<span class="t " id="t2" style="top:26px;font-size:11px;line-height:13px;color:#000;letter-spacing:0.098px;left:46px;">Test durchführen</span>
<span class="t " id="t3" style="top:26px;font-size:11px;line-height:13px;color:#000;letter-spacing:0.163px;left:141px;">Extra</span>
<span class="t " id="t4" style="top:26px;font-size:11px;line-height:13px;color:#000;letter-spacing:0.097px;left:178px;">Hilfe</span>
<span class="t " id="t5" style="top:58px;font-size:11px;line-height:13px;color:#000;letter-spacing:0.619px;left:177px;">[2:0]</span>
<span class="t " id="t6" style="top:58px;font-size:11px;line-height:13px;color:#000;letter-spacing:-0.536px;left:210px;">LITE-ON DVDRW LH-18A1P GL0F</span>
<span class="t " id="t7" style="top:57px;font-size:11px;line-height:13px;color:#000;letter-spacing:0.253px;left:499px;">Start</span>
<span class="t " id="t8" style="top:57px;font-size:11px;line-height:13px;color:#000;letter-spacing:-0.221px;left:571px;">Beenden</span>
<span class="t " id="t9" style="top:97px;font-size:11px;line-height:13px;color:#000;letter-spacing:-0.127px;left:18px;">Benchmark</span>
<span class="t " id="t10" style="top:97px;font-size:11px;line-height:13px;color:#000;letter-spacing:-0.181px;left:84px;">Disk erstellen</span>
<span class="t " id="t11" style="top:97px;font-size:11px;line-height:13px;color:#000;letter-spacing:-0.101px;left:159px;">Disk-Info</span>
<span class="t " id="t12" style="top:95px;font-size:11px;line-height:13px;color:#000;letter-spacing:-0.030px;left:213px;">Diskqualität</span>
<span class="t " id="t13" style="top:97px;font-size:11px;line-height:13px;color:#000;letter-spacing:0.004px;left:280px;">ScanDisk</span>
<span class="t " id="t14" style="top:119px;font-size:11px;line-height:13px;color:#000;letter-spacing:0.010px;left:500px;">Disk-Info</span>
<span class="t " id="t15" style="top:133px;font-size:11px;line-height:13px;color:#000;letter-spacing:0.176px;left:499px;">Typ:</span>
<span class="t " id="t16" style="top:133px;font-size:11px;line-height:13px;color:#000080;letter-spacing:0.098px;left:545px;">DVD+R DL</span>
<span class="t " id="t17" style="top:151px;font-size:11px;line-height:13px;color:#000;letter-spacing:0.146px;left:499px;">ID:</span>
<span class="t " id="t18" style="top:151px;font-size:11px;line-height:13px;color:#000080;letter-spacing:-0.083px;left:545px;">MKM 001</span>
<span class="t " id="t19" style="top:169px;font-size:11px;line-height:13px;color:#000;letter-spacing:-0.328px;left:499px;">Datum:</span>
<span class="t " id="t20" style="top:169px;font-size:11px;line-height:13px;color:#000080;letter-spacing:1.000px;left:545px;">n/a</span>
<span class="t " id="t21" style="top:187px;font-size:11px;line-height:13px;color:#000;letter-spacing:-0.081px;left:499px;">Label:</span>
<span class="t " id="t22" style="top:187px;font-size:11px;line-height:13px;color:#000080;letter-spacing:1.000px;left:545px;">n/a</span>
<span class="t " id="t23" style="top:210px;font-size:11px;line-height:13px;color:#000;letter-spacing:-0.197px;left:500px;">Einstellungen</span>
<span class="t " id="t24" style="top:230px;font-size:11px;line-height:13px;color:#000;left:504px;">4 X</span>
<span class="t " id="t25" style="top:257px;font-size:11px;line-height:13px;color:#000;letter-spacing:-0.299px;left:502px;">Start:</span>
<span class="t " id="t26" style="top:256px;font-size:11px;line-height:13px;color:#000;letter-spacing:-0.076px;left:557px;">0000 MB</span>
<span class="t " id="t27" style="top:280px;font-size:11px;line-height:13px;color:#000;letter-spacing:-0.450px;left:502px;">Ende:</span>
<span class="t " id="t28" style="top:279px;font-size:11px;line-height:13px;color:#000;letter-spacing:-0.076px;left:557px;">7328 MB</span>
<span class="t " id="t29" style="top:297px;font-size:11px;line-height:13px;color:#000;letter-spacing:-0.040px;left:520px;">Schnelles Scannen</span>
<span class="t " id="t30" style="top:315px;font-size:11px;line-height:13px;color:#000;letter-spacing:-0.071px;left:520px;">C1/PIE anzeigen</span>
<span class="t " id="t31" style="top:330px;font-size:11px;line-height:13px;color:#000;letter-spacing:-0.029px;left:520px;">C2/PIF anzeigen</span>
<span class="t " id="t32" style="top:346px;font-size:11px;line-height:13px;color:#000;letter-spacing:-0.136px;left:520px;">Jitter anzeigen</span>
<span class="t " id="t33" style="top:362px;font-size:11px;line-height:13px;color:#000;letter-spacing:-0.040px;left:520px;">Zeige Lesegeschw.</span>
<span class="t " id="t34" style="top:378px;font-size:11px;line-height:13px;color:#fff;letter-spacing:-0.056px;left:521px;">Zeige Schreibgeschw.</span>
<span class="t " id="t35" style="top:377px;font-size:11px;line-height:13px;color:#808080;letter-spacing:-0.056px;left:520px;">Zeige Schreibgeschw.</span>
<span class="t " id="t36" style="top:398px;font-size:11px;line-height:13px;color:#000;letter-spacing:-0.212px;left:567px;">Erweitert</span>
<span class="t " id="t37" style="top:432px;font-size:11px;line-height:13px;color:#000;letter-spacing:-0.284px;left:502px;">Qualitätsindex:</span>
<span class="t " id="t38" style="top:432px;font-size:11px;line-height:13px;color:#000080;right:24.000px;">95</span>
<span class="t " id="t39" style="top:467px;font-size:11px;line-height:13px;color:#000;letter-spacing:-0.204px;left:502px;">Fortschritt:</span>
<span class="t " id="t40" style="top:467px;font-size:11px;line-height:13px;color:#000080;letter-spacing:-0.241px;right:24.241px;">100 %</span>
<span class="t " id="t41" style="top:483px;font-size:11px;line-height:13px;color:#000;letter-spacing:-0.189px;left:502px;">Position:</span>
<span class="t " id="t42" style="top:483px;font-size:11px;line-height:13px;color:#000080;letter-spacing:-0.004px;right:24.004px;">7327 MB</span>
<span class="t " id="t43" style="top:498px;font-size:11px;line-height:13px;color:#000;letter-spacing:-0.166px;left:502px;">Geschwindigkeit:</span>
<span class="t " id="t44" style="top:498px;font-size:11px;line-height:13px;color:#000080;letter-spacing:-0.052px;right:24.052px;">3.90 X</span>
<span class="t " id="t45" style="top:452px;font-size:11px;line-height:13px;color:#000;letter-spacing:-0.212px;left:35px;">PI Errors</span>
<span class="t " id="t46" style="top:467px;font-size:11px;line-height:13px;color:#000;letter-spacing:-0.012px;left:22px;">Durchschnitt</span>
<span class="t " id="t47" style="top:467px;font-size:11px;line-height:13px;color:#000080;right:494.000px;">5.87</span>
<span class="t " id="t48" style="top:483px;font-size:11px;line-height:13px;color:#000;letter-spacing:-0.529px;left:22px;">Maximum:</span>
<span class="t " id="t49" style="top:483px;font-size:11px;line-height:13px;color:#000080;right:494.000px;">16</span>
<span class="t " id="t50" style="top:498px;font-size:11px;line-height:13px;color:#000;letter-spacing:-0.440px;left:22px;">Gesamt:</span>
<span class="t " id="t51" style="top:498px;font-size:11px;line-height:13px;color:#000080;right:494.000px;">110002</span>
<span class="t " id="t52" style="top:452px;font-size:11px;line-height:13px;color:#000;letter-spacing:-0.280px;left:193px;">PI Failures</span>
<span class="t " id="t53" style="top:467px;font-size:11px;line-height:13px;color:#000;letter-spacing:-0.012px;left:181px;">Durchschnitt</span>
<span class="t " id="t54" style="top:467px;font-size:11px;line-height:13px;color:#000080;right:335.000px;">0.01</span>
<span class="t " id="t55" style="top:483px;font-size:11px;line-height:13px;color:#000;letter-spacing:-0.529px;left:181px;">Maximum:</span>
<span class="t " id="t56" style="top:483px;font-size:11px;line-height:13px;color:#000080;right:335.000px;">2</span>
<span class="t " id="t57" style="top:498px;font-size:11px;line-height:13px;color:#000;letter-spacing:-0.440px;left:181px;">Gesamt:</span>
<span class="t " id="t58" style="top:498px;font-size:11px;line-height:13px;color:#000080;right:335.000px;">250</span>
<span class="t " id="t59" style="top:452px;font-size:11px;line-height:13px;color:#000;letter-spacing:-0.224px;left:352px;">Jitter</span>
<span class="t " id="t60" style="top:467px;font-size:11px;line-height:13px;color:#000;letter-spacing:-0.012px;left:340px;">Durchschnitt</span>
<span class="t " id="t61" style="top:467px;font-size:11px;line-height:13px;color:#000080;right:176.000px;">-</span>
<span class="t " id="t62" style="top:483px;font-size:11px;line-height:13px;color:#000;letter-spacing:-0.529px;left:340px;">Maximum:</span>
<span class="t " id="t63" style="top:483px;font-size:11px;line-height:13px;color:#000080;right:176.000px;">-</span>
<span class="t " id="t64" style="top:502px;font-size:11px;line-height:13px;color:#000;letter-spacing:-0.171px;left:340px;">PO Ausfälle:</span>
<span class="t " id="t65" style="top:502px;font-size:11px;line-height:13px;color:#000080;right:176.000px;">-</span>
<span class="t " id="t66" style="top:123px;font-size:12px;line-height:14px;color:#000;right:603.000px;">20</span>
<span class="t " id="t67" style="top:150px;font-size:12px;line-height:14px;color:#000;right:603.000px;">16</span>
<span class="t " id="t68" style="top:177px;font-size:12px;line-height:14px;color:#000;right:603.000px;">12</span>
<span class="t " id="t69" style="top:203px;font-size:12px;line-height:14px;color:#000;right:603.000px;">8</span>
<span class="t " id="t70" style="top:230px;font-size:12px;line-height:14px;color:#000;right:603.000px;">4</span>
<span class="t " id="t71" style="top:130px;font-size:12px;line-height:14px;color:#000;left:470px;">20</span>
<span class="t " id="t72" style="top:155px;font-size:12px;line-height:14px;color:#000;left:470px;">16</span>
<span class="t " id="t73" style="top:180px;font-size:12px;line-height:14px;color:#000;left:470px;">12</span>
<span class="t " id="t74" style="top:206px;font-size:12px;line-height:14px;color:#000;left:470px;">8</span>
<span class="t " id="t75" style="top:231px;font-size:12px;line-height:14px;color:#000;left:470px;">4</span>
<span class="t " id="t76" style="top:285px;font-size:12px;line-height:14px;color:#000;right:603.000px;">10</span>
<span class="t " id="t77" style="top:285px;font-size:12px;line-height:14px;color:#000;left:470px;">10</span>
<span class="t " id="t78" style="top:312px;font-size:12px;line-height:14px;color:#000;right:603.000px;">8</span>
<span class="t " id="t79" style="top:312px;font-size:12px;line-height:14px;color:#000;left:470px;">8</span>
<span class="t " id="t80" style="top:339px;font-size:12px;line-height:14px;color:#000;right:603.000px;">6</span>
<span class="t " id="t81" style="top:339px;font-size:12px;line-height:14px;color:#000;left:470px;">6</span>
<span class="t " id="t82" style="top:365px;font-size:12px;line-height:14px;color:#000;right:603.000px;">4</span>
<span class="t " id="t83" style="top:365px;font-size:12px;line-height:14px;color:#000;left:470px;">4</span>
<span class="t " id="t84" style="top:392px;font-size:12px;line-height:14px;color:#000;right:603.000px;">2</span>
<span class="t " id="t85" style="top:392px;font-size:12px;line-height:14px;color:#000;left:470px;">2</span>
<span class="t ctr" id="t86" style="top:267px;font-size:12px;line-height:14px;color:#000;left:42px;">0.0</span>
<span class="t ctr" id="t87" style="top:429px;font-size:12px;line-height:14px;color:#000;left:42px;">0.0</span>
<span class="t ctr" id="t88" style="top:267px;font-size:12px;line-height:14px;color:#000;left:94px;">1.0</span>
<span class="t ctr" id="t89" style="top:429px;font-size:12px;line-height:14px;color:#000;left:94px;">1.0</span>
<span class="t ctr" id="t90" style="top:267px;font-size:12px;line-height:14px;color:#000;left:146px;">2.0</span>
<span class="t ctr" id="t91" style="top:429px;font-size:12px;line-height:14px;color:#000;left:146px;">2.0</span>
<span class="t ctr" id="t92" style="top:267px;font-size:12px;line-height:14px;color:#000;left:198px;">3.0</span>
<span class="t ctr" id="t93" style="top:429px;font-size:12px;line-height:14px;color:#000;left:198px;">3.0</span>
<span class="t ctr" id="t94" style="top:267px;font-size:12px;line-height:14px;color:#000;left:251px;">4.0</span>
<span class="t ctr" id="t95" style="top:429px;font-size:12px;line-height:14px;color:#000;left:251px;">4.0</span>
<span class="t ctr" id="t96" style="top:267px;font-size:12px;line-height:14px;color:#000;left:303px;">5.0</span>
<span class="t ctr" id="t97" style="top:429px;font-size:12px;line-height:14px;color:#000;left:303px;">5.0</span>
<span class="t ctr" id="t98" style="top:267px;font-size:12px;line-height:14px;color:#000;left:355px;">6.0</span>
<span class="t ctr" id="t99" style="top:429px;font-size:12px;line-height:14px;color:#000;left:355px;">6.0</span>
<span class="t ctr" id="t100" style="top:267px;font-size:12px;line-height:14px;color:#000;left:407px;">7.0</span>
<span class="t ctr" id="t101" style="top:429px;font-size:12px;line-height:14px;color:#000;left:407px;">7.0</span>
<span class="t ctr" id="t102" style="top:267px;font-size:12px;line-height:14px;color:#000;left:460px;">8.0</span>
<span class="t ctr" id="t103" style="top:429px;font-size:12px;line-height:14px;color:#000;left:460px;">8.0</span>
</body></html>
